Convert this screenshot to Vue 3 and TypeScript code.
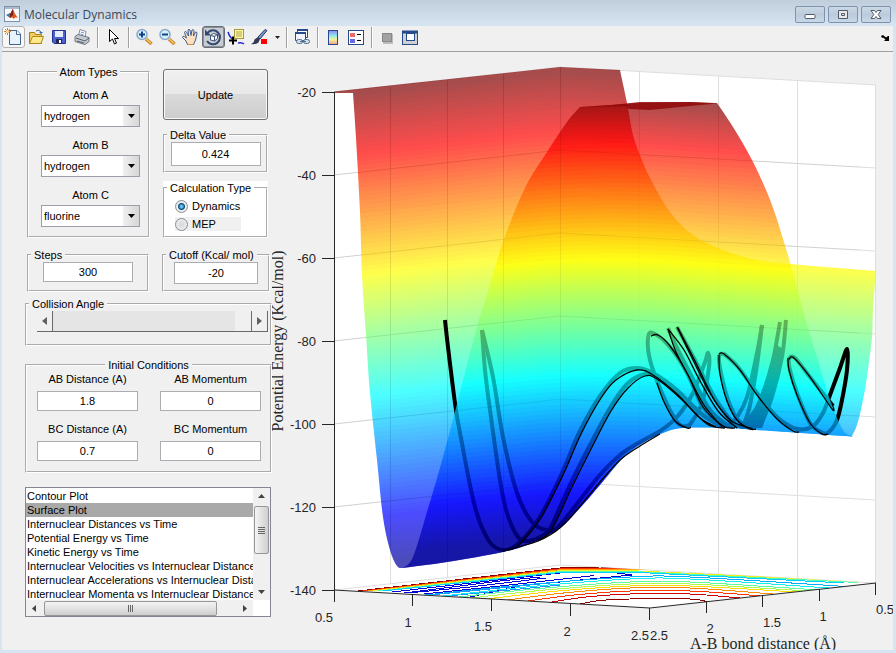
<script setup lang="ts">
import { ref } from 'vue'

type Point = [number, number]

const atoms = ref([
  { id: 'atom-a', label: 'Atom A', value: 'hydrogen' },
  { id: 'atom-b', label: 'Atom B', value: 'hydrogen' },
  { id: 'atom-c', label: 'Atom C', value: 'fluorine' },
])
const elements = ['hydrogen', 'fluorine', 'chlorine']

const delta = ref('0.424')
const calcType = ref('dynamics')
const steps = ref('300')
const cutoff = ref('-20')
const angle = ref(180)

const conditions = ref([
  { id: 'ab-dist', label: 'AB Distance (A)', value: '1.8' },
  { id: 'ab-mom', label: 'AB Momentum', value: '0' },
  { id: 'bc-dist', label: 'BC Distance (A)', value: '0.7' },
  { id: 'bc-mom', label: 'BC Momentum', value: '0' },
])

const plots = [
  'Contour Plot',
  'Surface Plot',
  'Internuclear Distances vs Time',
  'Potential Energy vs Time',
  'Kinetic Energy vs Time',
  'Internuclear Velocities vs Internuclear Distance',
  'Internuclear Accelerations vs Internuclear Distance',
  'Internuclear Momenta vs Internuclear Distance',
]
const plot = ref('Surface Plot')

/* Jet colour map, t from 0 (dark blue) to 1 (dark red). */
function jet(t: number): string {
  const c = (k: number) =>
    Math.round(255 * Math.max(0, Math.min(1, 1.5 - Math.abs(4 * t - k))))
  return `rgb(${c(3)},${c(2)},${c(1)})`
}

/* Each band starts at its own height and runs to the floor; later bands cover earlier ones. */
const bandTops = Array.from({ length: 120 }, (_, i) => 60 + i * 4.4)
const level = (y: number) => Math.min(1, Math.max(0.03, 1 - (y - 68) / 488))
const backBands = bandTops.map((y) => ({
  d: `M330 ${y + 25}L530 ${y + 3}Q560 ${y} 590 ${y + 2}L880 ${y + 18}V640H330Z`,
  fill: jet(level(y)),
}))
const frontBands = bandTops.map((y) => {
  const u = y < 144 ? 67 + ((y - 97) * 64) / 47 : 131 + ((y - 144) * 239) / 226
  return {
    d: `M330 ${y + 24}L540 ${y + 3}Q620 ${y - 4} 700 ${y + 4}L880 ${y + 16}V640H330Z`,
    fill: jet(level(u)),
  }
})

/* Catmull-Rom spline through the points, as a fragment that starts with the given command. */
function spline(p: Point[], start = 'M'): string {
  let d = `${start}${p[0][0]} ${p[0][1]}`
  for (let i = 0; i < p.length - 1; i++) {
    const a = p[Math.max(0, i - 1)]
    const b = p[i]
    const c = p[i + 1]
    const e = p[Math.min(p.length - 1, i + 2)]
    d += `C${b[0] + (c[0] - a[0]) / 6} ${b[1] + (c[1] - a[1]) / 6} ${c[0] - (e[0] - b[0]) / 6} ${c[1] - (e[1] - b[1]) / 6} ${c[0]} ${c[1]}`
  }
  return d
}

const valley: Point[] = [[852, 436], [843, 436], [757, 430], [723, 428], [683, 428], [663, 433], [643, 443], [623, 458], [600, 485], [580, 508], [560, 528], [532, 543], [503, 552], [447, 562], [403, 568]]
const leftEdge: Point[] = [[403, 568], [397, 566], [390, 550], [383, 517], [377, 460], [370, 393], [366, 335], [362, 275], [360, 212], [356, 138], [353, 93]]
const backRight: Point[] = [[620, 70], [627, 103], [633, 135], [640, 155], [650, 178], [670, 212], [693, 235], [723, 250], [757, 260], [790, 264], [876, 271]]
const rightEdge: Point[] = [[876, 271], [873, 310], [872, 337], [867, 377], [862, 405], [857, 425], [852, 436]]
const frontLeft: Point[] = [[403, 568], [413, 557], [427, 512], [443, 457], [458, 400], [477, 327], [487, 295], [503, 242], [525, 188], [547, 152], [567, 122], [580, 107]]
const frontRight: Point[] = [[717, 103], [733, 127], [753, 162], [772, 205], [790, 262], [798, 292], [810, 335], [817, 357], [830, 400], [843, 430], [852, 436]]

const backShape = `M334 91.5L560 67${spline(backRight, 'L')}${spline(rightEdge, 'L')}${spline(valley, 'L')}${spline(leftEdge, 'L')}L334 93Z`
const frontShape = `${spline(frontLeft)}L640 103L690 102${spline(frontRight, 'L')}${spline(valley, 'L')}Z`

const hidden: string[] = [
  [[445, 320], [448, 347], [455, 403], [460, 433], [475, 507], [489, 541], [503, 550], [518, 544], [540, 517], [562, 473], [579, 433], [600, 396], [620, 373], [637, 368], [653, 373], [677, 390], [700, 413], [722, 427]],
  [[482, 330], [485, 370], [490, 410], [500, 480], [507, 513], [518, 537], [528, 541], [542, 536], [551, 527], [569, 487], [590, 445], [610, 408], [627, 384], [645, 374], [657, 377], [678, 393], [707, 418], [725, 427]],
  [[482, 330], [493, 377], [503, 437], [517, 493], [532, 522], [547, 530], [560, 525], [598, 477], [620, 455], [640, 442], [660, 431], [677, 417], [693, 393], [705, 362], [708, 353], [709, 367], [702, 403], [693, 420], [687, 426], [677, 422], [662, 393], [650, 360], [648, 338], [653, 333], [670, 347], [687, 373], [703, 407], [723, 425], [733, 428]],
  [[668, 328], [677, 348], [692, 377], [710, 410], [730, 427]],
  [[677, 327], [695, 360], [715, 398], [735, 424], [753, 428]],
  [[762, 325], [757, 353], [747, 397], [737, 417], [727, 427]],
  [[762, 325], [757, 365], [750, 405], [743, 427]],
  [[780, 322], [773, 360], [763, 393], [750, 423]],
  [[786, 320], [782, 357], [772, 397], [760, 427]],
  [[723, 353], [719, 357], [721, 373], [728, 400], [738, 420], [750, 428]],
  [[723, 353], [738, 367], [757, 393], [777, 417], [797, 429], [813, 426], [823, 413], [830, 395], [840, 368], [847, 349], [847, 370], [842, 400], [837, 420], [830, 431], [823, 433], [810, 423], [797, 393], [790, 370], [789, 359], [795, 358], [810, 377], [833, 406]],
].map((p) => spline(p as Point[]))

const hiddenMass = 'M777 345L784 350L772 400L762 428H738L750 414L757 405L766 388Z'

const visible: string[] = [
  [[518, 546], [540, 519], [563, 475], [581, 434], [601, 398], [616, 380], [637, 370], [653, 375], [677, 394], [700, 418], [716, 427]],
  [[538, 541], [552, 529], [571, 489], [591, 449], [611, 411], [628, 388], [645, 376], [657, 379], [680, 398], [707, 424], [725, 428]],
  [[503, 551], [538, 541], [561, 527], [585, 500], [600, 482], [620, 460], [640, 446], [660, 434]],
  [[657, 383], [664, 402], [675, 421], [687, 428], [691, 427]],
  [[651, 336], [658, 335], [670, 346], [687, 373], [703, 407], [723, 426], [735, 428]],
  [[668, 329], [676, 352], [689, 377], [704, 405], [722, 427]],
  [[668, 329], [684, 350], [699, 379], [718, 411], [737, 428]],
  [[677, 327], [692, 358], [711, 395], [730, 420], [753, 429]],
  [[678, 328], [697, 365], [715, 401], [732, 422]],
  [[719, 355], [720, 374], [727, 401], [737, 420], [750, 429], [756, 429]],
  [[719, 354], [724, 354], [740, 370], [757, 395], [777, 419], [793, 431], [799, 432]],
  [[788, 358], [789, 370], [797, 395], [810, 423], [822, 434], [828, 434]],
  [[789, 359], [794, 358], [810, 377], [832, 409], [833, 406]],
].map((p) => spline(p as Point[]))

/* Heights of the seven energy ticks on the left edge, 83 apart. */
const ticks = [-20, -40, -60, -80, -100, -120, -140].map((v, i) => ({ v, y: 92 + i * 83 }))
const verticals = [
  [390, 86, 584], [447, 80, 578], [503, 74, 572], [560, 67, 565],
  [639, 72, 570], [718, 76, 574], [797, 81, 579], [875, 85, 583],
]
const floorTicks = [
  [334, 590], [412, 594], [491, 599], [570, 604], [649, 608],
  [706, 601], [762, 595], [819, 589], [875, 583],
]
const floorLabels = [
  [324, 622, '0.5'], [408, 627, '1'], [483, 631, '1.5'], [567, 636, '2'], [640, 640, '2.5'],
  [659, 640, '2.5'], [710, 633, '2'], [772, 627, '1.5'], [823, 621, '1'], [885, 614, '0.5'],
]

/* Contours on the floor: the steep ones follow the back edge, the rest arch towards the front. */
const backColours = ['#900000', '#ff3300', '#ffa000', '#f0f020', '#50ffb0', '#00d0ff']
const backContours = backColours.map((c, i) => ({
  c,
  d: `M${358 + i * 5} 591L560 ${568 + i * 0.9}L${600 + i * 8} ${567 + i * 1.1}L${i < 3 ? 640 + i * 25 : 872 - (i - 3) * 14} ${i < 3 ? 568 + i * 1.2 : 582 + (i - 3) * 0.5}`,
}))
const front: [string, number, number, number][] = [
  ['#900000', 580, 599, 707], ['#d00000', 550, 594, 740], ['#ff3800', 528, 591, 760],
  ['#ff8c00', 508, 588, 775], ['#ffe000', 488, 586, 795], ['#b0ff50', 472, 584, 805],
  ['#60ffa0', 458, 582, 815], ['#10f0f0', 442, 579, 830], ['#00b0ff', 424, 577, 845],
]
const frontY = (x: number) => (x < 650 ? 590 + ((x - 334) * 18) / 316 : 608 - ((x - 650) * 25) / 226)
const frontContours = front.map(([c, a, y, b]) => ({
  c,
  d: spline([[a, frontY(a)], [(a + 620) / 2, (frontY(a) + y) / 2 - 1], [630, y], [690, y], [b, frontY(b)]]),
}))
const blueContours = [
  'M392 592L480 582L560 573L610 572L632 575L590 579L520 586L470 597',
  'M404 593L500 581L540 577', 'M408 593L470 587L546 578', 'M424 594L500 586L590 576L594 575',
  'M430 595L510 587L550 583', 'M448 596L520 589L560 585', 'M380 591L470 580L560 572',
]
</script>

<template>
  <div class="window">
    <header class="titlebar">
      <svg class="logo" width="16" height="16" viewBox="0 0 16 16" aria-hidden="true">
        <rect x=".5" y=".5" width="15" height="15" fill="#f6f9fc" stroke="#8292a6" />
        <rect x="1" y="1" width="14" height="2" fill="#a9bbd0" />
        <path d="M2 9l4-2 3 2-3 3z" fill="#3c7bb0" />
        <path d="M6 8c1-1 2-4 3-5 1 2 2 6 5 9-2-1-3-1-4 1-1-1-2-2-4-1z" fill="#d9541e" />
        <path d="M6 8c1-1 2-4 3-5l0 6-3 3z" fill="#7c2414" />
      </svg>
      <h1>Molecular Dynamics</h1>
      <div class="winbtns">
        <button type="button" aria-label="Minimize">
          <svg width="12" height="12"><rect x="1" y="5.500" width="10" height="4" rx="1" fill="#fff" stroke="#4f5a6c" /></svg>
        </button>
        <button type="button" aria-label="Maximize">
          <svg width="12" height="12"><path d="M1.500 1.500h9v8h-9zM4.500 4.500h3v2h-3z" fill="#e8e8e8" stroke="#4f5a6c" /></svg>
        </button>
        <button type="button" aria-label="Close">
          <svg width="12" height="12"><path d="M1 1.500h3.500L6 3.500l1.500-2H11L8.200 5.500 11 9.500H7.500L6 7.500l-1.500 2H1l2.800-4z" fill="#fff" stroke="#4f5a6c" /></svg>
        </button>
      </div>
    </header>

    <nav class="toolbar" aria-label="Figure toolbar">
      <button type="button" class="tool hover" aria-label="New figure">
        <svg width="18" height="18" viewBox="0 0 18 18">
          <path d="M5.500 2.500h7.500l3.500 3.500v10.500h-11z" fill="#e6f2fc" stroke="#44628c" />
          <path d="M12.500 2.500V6.500h4" fill="#fff" stroke="#44628c" />
          <path d="M3.500 0v7M0 3.500h7M1 1l5 5M6 1L1 6" stroke="#e0762c" /><circle cx="3.500" cy="3.500" r="1.500" fill="#fbe3a0" />
        </svg>
      </button>
      <button type="button" class="tool" aria-label="Open file">
        <svg width="18" height="18" viewBox="0 0 18 18">
          <path d="M2.500 15.500v-11h5l1 2h6v9z" fill="#f1cf63" stroke="#a87e12" />
          <path d="M2.500 15.500l3-7h11l-2.500 7z" fill="#fde98c" stroke="#b08614" />
          <path d="M9 3q3-2 5 1" stroke="#3a67a8" fill="none" /><path d="M12 4h4l-2 2z" fill="#3a67a8" />
        </svg>
      </button>
      <button type="button" class="tool" aria-label="Save figure">
        <svg width="18" height="18" viewBox="0 0 18 18">
          <path d="M2.500 2.500h13v13H4l-1.500-1.500z" fill="#4a5fd2" stroke="#26328e" />
          <rect x="5" y="3" width="8" height="6" fill="#e4edfb" /><rect x="6" y="11" width="6" height="4.500" fill="#20284c" /><rect x="9" y="12" width="2" height="3" fill="#fff" />
        </svg>
      </button>
      <button type="button" class="tool" aria-label="Print figure">
        <svg width="18" height="18" viewBox="0 0 18 18">
          <path d="M5.500 8L7 1.500l6 2-1 6" fill="#fff" stroke="#7e8da3" />
          <path d="M2 8.500l3-2 11 3v4l-4 3-10-3z" fill="#c5cad2" stroke="#6d7583" />
          <path d="M3 10l9 3 4-3M4 13l7 2" stroke="#58606c" fill="none" /><path d="M8 4l3 1M7.500 6l3 1" stroke="#6a8cc0" />
        </svg>
      </button>
      <i class="sep" />
      <button type="button" class="tool" aria-label="Edit plot">
        <svg width="18" height="18" viewBox="0 0 18 18"><path d="M5.500 1.500v12l3-2.500 2 5 2-1-2-4.500h4z" fill="#fff" stroke="#000" /></svg>
      </button>
      <i class="sep" />
      <button type="button" class="tool" aria-label="Zoom in">
        <svg width="18" height="18" viewBox="0 0 18 18">
          <path d="M11 11l5.500 5" stroke="#c98322" stroke-width="3.500" /><path d="M11 10.500l5 5" stroke="#f6c469" stroke-width="1.500" />
          <circle cx="7" cy="6.500" r="5" fill="#d5f0fa" stroke="#86aacb" stroke-width="1.500" /><path d="M4 6.500h6M7 3.500v6" stroke="#15418a" stroke-width="2" />
        </svg>
      </button>
      <button type="button" class="tool" aria-label="Zoom out">
        <svg width="18" height="18" viewBox="0 0 18 18">
          <path d="M11 11l5.500 5" stroke="#c98322" stroke-width="3.500" /><path d="M11 10.500l5 5" stroke="#f6c469" stroke-width="1.500" />
          <circle cx="7" cy="6.500" r="5" fill="#d5f0fa" stroke="#86aacb" stroke-width="1.500" /><path d="M4 6.500h6" stroke="#15418a" stroke-width="2" />
        </svg>
      </button>
      <button type="button" class="tool" aria-label="Pan">
        <svg width="18" height="18" viewBox="0 0 18 18">
          <path d="M6.500 16.500L5 13 1.500 9.500q0-2 2-1L5.500 10 3.500 4.500q.5-2 2-.5L7.500 8 7 2q1-1.500 2 0l1 5.500L11 2q1.500-1 2 .5L12.500 8l2-4q1.500-.5 1.500 1.500L14.500 12l-2 4.500z" fill="#fde0bd" stroke="#3e5c94" stroke-linejoin="round" />
          <path d="M7 16.500h5" stroke="#d98d4a" />
        </svg>
      </button>
      <button type="button" class="tool pressed" aria-label="Rotate 3D">
        <svg width="18" height="18" viewBox="0 0 18 18">
          <path d="M3.500 5A7 7 0 1 1 3 13" fill="none" stroke="#33486f" stroke-width="2" /><path d="M1 1.500v6h6z" fill="#33486f" />
          <path d="M6.500 7.500l3-2 4 1v4l-3 2.500-4-1zM6.500 7.500l4 1 3-2M10.500 8.500V13" fill="#fff" stroke="#3d5377" />
        </svg>
      </button>
      <button type="button" class="tool" aria-label="Data cursor">
        <svg width="18" height="18" viewBox="0 0 18 18">
          <path d="M1 4q1 4 4 7M11 15q4-1 6 1" fill="none" stroke="#2727e0" stroke-width="1.500" />
          <rect x="7.500" y="1.500" width="9" height="9" fill="#fdf6a8" stroke="#a49a3a" /><path d="M9 4h6M9 6h6M9 8h6" stroke="#b3a54c" />
          <path d="M2 12.500h8M6 8.500v8" stroke="#000" stroke-width="2" />
        </svg>
      </button>
      <button type="button" class="tool" aria-label="Brush data">
        <svg width="18" height="18" viewBox="0 0 18 18">
          <path d="M8 9l7-7.500 2 1L10 11z" fill="#7e90bf" stroke="#2c3d72" />
          <path d="M1 16q3-1 3.500-4.500L8 9l2 2-1.500 3.500Q5 17 1 16z" fill="#333a52" /><rect x="11" y="11" width="6" height="5" fill="#f00" />
        </svg>
      </button>
      <button type="button" class="caret" aria-label="Brush options"><svg width="5" height="3"><path d="M0 0h5L2.500 3z" fill="#222" /></svg></button>
      <i class="sep" />
      <button type="button" class="tool" aria-label="Link plot">
        <svg width="18" height="18" viewBox="0 0 18 18">
          <path d="M4.500 1.500h10v8h-10z" fill="#fff" stroke="#264a8c" /><path d="M4 2h11" stroke="#264a8c" stroke-width="2" />
          <path d="M2.500 4.500h10v8h-10z" fill="#f2f2fc" stroke="#264a8c" /><path d="M2 5h11" stroke="#264a8c" stroke-width="2" />
          <rect x="3.500" y="11.500" width="6" height="4" rx="2" fill="#d5dfe9" stroke="#52708e" /><rect x="10.500" y="11.500" width="6" height="4" rx="2" fill="#d5dfe9" stroke="#52708e" /><path d="M7 13.500h6" stroke="#52708e" />
        </svg>
      </button>
      <i class="sep" />
      <button type="button" class="tool" aria-label="Insert colorbar">
        <svg width="18" height="18" viewBox="0 0 18 18">
          <defs><linearGradient id="cb" x2="0" y2="1"><stop offset="0" stop-color="#8d85f0" /><stop offset=".35" stop-color="#8fe4f0" /><stop offset=".65" stop-color="#f3f19b" /><stop offset="1" stop-color="#f19a8a" /></linearGradient></defs>
          <rect x="4.500" y="2.500" width="9" height="14" fill="url(#cb)" stroke="#264a8c" />
        </svg>
      </button>
      <button type="button" class="tool" aria-label="Insert legend">
        <svg width="18" height="18" viewBox="0 0 18 18">
          <rect x="1.500" y="2.500" width="15" height="14" fill="#fff" stroke="#264a8c" />
          <rect x="3" y="5" width="5" height="4" fill="#e96a6a" /><rect x="3" y="11" width="5" height="4" fill="#6a6ae9" /><path d="M10 6.500h4M10 12.500h4" stroke="#000" />
        </svg>
      </button>
      <i class="sep" />
      <button type="button" class="tool" aria-label="Hide plot tools">
        <svg width="18" height="18" viewBox="0 0 18 18"><rect x="5" y="6" width="10" height="10" fill="#bcbcbc" /><rect x="4.500" y="5.500" width="9" height="8" fill="#a2a2a2" stroke="#888" /></svg>
      </button>
      <button type="button" class="tool" aria-label="Show plot tools and dock figure">
        <svg width="18" height="18" viewBox="0 0 18 18">
          <rect x="1.500" y="3.500" width="15" height="13" fill="#cdd2d0" stroke="#264a8c" /><path d="M1 4h16" stroke="#264a8c" stroke-width="3" /><rect x="5.500" y="5.500" width="8" height="7" fill="#fff" stroke="#264a8c" />
        </svg>
      </button>
      <button type="button" class="dock" aria-label="Dock figure">
        <svg width="8" height="7"><path d="M0 2l2-1 3 2.500L7 2h1v5H3l1.500-1.500L2 3.500 1 4z" fill="#000" /></svg>
      </button>
    </nav>

    <main class="body">
      <form class="controls" @submit.prevent>
        <div class="pair">
          <fieldset class="atoms">
            <legend>Atom Types</legend>
            <div v-for="a in atoms" :key="a.id" class="atom">
              <label :for="a.id">{{ a.label }}</label>
              <span class="drop">
                <select :id="a.id" v-model="a.value">
                  <option v-for="e in elements" :key="e">{{ e }}</option>
                </select>
                <span class="arrow"><svg width="7" height="4"><path d="M0 0h7L3.500 4z" /></svg></span>
              </span>
            </div>
          </fieldset>
          <div class="stack">
            <button type="submit" class="update">Update</button>
            <fieldset class="start">
              <legend><label for="delta">Delta Value</label></legend>
              <input id="delta" v-model="delta" class="field tall" type="text">
            </fieldset>
            <div class="white">
              <fieldset class="start">
                <legend>Calculation Type</legend>
                <label class="radio"><input v-model="calcType" type="radio" name="calc" value="dynamics">Dynamics</label>
                <label class="radio grey"><input v-model="calcType" type="radio" name="calc" value="mep">MEP</label>
              </fieldset>
            </div>
          </div>
        </div>

        <div class="pair limits">
          <fieldset class="start">
            <legend><label for="steps">Steps</label></legend>
            <input id="steps" v-model="steps" class="field" type="text">
          </fieldset>
          <fieldset class="start">
            <legend><label for="cutoff">Cutoff (Kcal/ mol)</label></legend>
            <input id="cutoff" v-model="cutoff" class="field narrow" type="text">
          </fieldset>
        </div>

        <fieldset class="start angle">
          <legend><label for="angle">Collision Angle</label></legend>
          <div class="slider">
            <button type="button" aria-label="Decrease angle" @click="angle = Math.max(0, angle - 1)"><svg width="5" height="8"><path d="M5 0v8L0 4z" /></svg></button>
            <input id="angle" v-model.number="angle" type="range" min="0" max="180">
            <button type="button" aria-label="Increase angle" @click="angle = Math.min(180, angle + 1)"><svg width="5" height="8"><path d="M0 0v8l5-4z" /></svg></button>
          </div>
        </fieldset>

        <fieldset class="initial">
          <legend>Initial Conditions</legend>
          <div class="conditions">
            <div v-for="c in conditions" :key="c.id" class="condition">
              <label :for="c.id">{{ c.label }}</label>
              <input :id="c.id" v-model="c.value" class="field" type="text">
            </div>
          </div>
        </fieldset>

        <div class="listbox">
          <select v-model="plot" size="8" aria-label="Plot type">
            <option v-for="p in plots" :key="p">{{ p }}</option>
          </select>
          <div class="vbar" aria-hidden="true">
            <svg width="7" height="4"><path d="M0 4h7L3.500 0z" /></svg>
            <span class="vthumb"><i /><i /><i /><i /></span>
            <svg class="end" width="7" height="4"><path d="M0 0h7L3.500 4z" /></svg>
          </div>
          <div class="hbar" aria-hidden="true">
            <svg width="4" height="7"><path d="M4 0v7L0 3.500z" /></svg>
            <span class="hthumb"><i /><i /><i /></span>
            <svg class="end" width="4" height="7"><path d="M0 0v7l4-3.500z" /></svg>
          </div>
        </div>
      </form>

      <svg class="plot" viewBox="272 52 621 598" preserveAspectRatio="xMinYMin meet" role="img" aria-label="Potential energy surface">
        <defs>
          <clipPath id="back"><path :d="backShape" /></clipPath>
          <clipPath id="front"><path :d="frontShape" /></clipPath>
          <clipPath id="floor"><path d="M334 590.500L560 565L876 583L650 608.500Z" /></clipPath>
        </defs>

        <path d="M334 92L560 67L876 85V583L650 608L334 590Z" fill="#fff" />
        <g class="grid">
          <path v-for="t in ticks" :key="t.v" :d="`M334 ${t.y}L560 ${t.y - 25}L876 ${t.y - 7}`" />
          <path v-for="v in verticals" :key="v[0]" :d="`M${v[0]}.500 ${v[1]}V${v[2]}`" />
        </g>

        <g clip-path="url(#floor)">
          <g class="contours">
            <path v-for="(b, i) in blueContours" :key="'b' + i" :d="b" :stroke="i < 4 ? '#0000d8' : '#2090ff'" />
            <path v-for="f in frontContours" :key="f.c" :d="f.d" :stroke="f.c" />
            <path v-for="b in backContours" :key="b.c" :d="b.d" :stroke="b.c" />
          </g>
        </g>

        <g opacity=".7" clip-path="url(#back)">
          <path v-for="(b, i) in backBands" :key="i" :d="b.d" :fill="b.fill" />
        </g>
        <g class="hidden-run" clip-path="url(#back)">
          <path v-for="(h, i) in hidden" :key="i" :d="h" />
          <path :d="hiddenMass" class="mass" />
        </g>
        <g opacity=".7" clip-path="url(#front)">
          <path v-for="(b, i) in frontBands" :key="i" :d="b.d" :fill="b.fill" />
        </g>
        <path d="M580 107L612 105L640 102L690 102L717 103.500L690 106L650 110L629 109L626 106Z" fill="#900808" opacity=".85" />
        <path class="faint" d="M390.500 86V550M447.500 80V558M503.500 74V548M560.500 67V525M334 175L560 150L860 167M334 258L560 233L860 250M334 341L560 316L860 333M334 424L560 399L860 416M334 507L560 482" />
        <g class="run">
          <path v-for="(v, i) in visible" :key="i" :d="v" />
        </g>

        <g class="axes">
          <path d="M334.500 92V602M334 590L650 608L876 583" />
          <path v-for="t in ticks" :key="t.v" :d="`M322 ${t.y}.500H334`" />
          <path v-for="f in floorTicks" :key="f[0]" :d="`M${f[0]}.500 ${f[1]}v12`" />
        </g>
        <g class="nums">
          <text v-for="t in ticks" :key="t.v" x="316" :y="t.y + 5" text-anchor="end">{{ t.v }}</text>
          <text v-for="(l, i) in floorLabels" :key="i" :x="l[0]" :y="l[1]" text-anchor="middle">{{ l[2] }}</text>
        </g>
        <text class="name" x="763" y="649" text-anchor="middle">A-B bond distance (Å)</text>
        <text class="name" transform="translate(283 341) rotate(-90)" text-anchor="middle">Potential Energy (Kcal/mol)</text>
      </svg>
    </main>
  </div>
</template>

<style>
html,
body {
  margin: 0;
  height: 100%;
}
#app {
  height: 100%;
}
</style>

<style scoped>
* {
  box-sizing: border-box;
}
.window {
  min-height: 100%;
  display: flex;
  flex-direction: column;
  padding: 0 3px 3px 2px;
  background: #d7e4f2;
  color: #000;
  font: 11px/14px "Liberation Sans", Arial, sans-serif;
}
button,
input,
select {
  font: inherit;
  color: inherit;
  margin: 0;
}
.titlebar {
  height: 26px;
  margin: 0 -3px 0 -2px;
  padding: 0 5px 0 4px;
  display: flex;
  align-items: center;
  gap: 4px;
  background: linear-gradient(#c0cddb, #d7e4f2);
}
.logo {
  margin-top: 2px;
}
h1 {
  margin: 3px auto 0 0;
  font: 12px/18px "Open Sans", "Noto Sans", sans-serif;
  color: #3c4858;
}
.winbtns {
  display: flex;
  gap: 3px;
  padding-top: 3px;
}
.winbtns button {
  width: 30px;
  height: 17px;
  padding: 0;
  display: grid;
  place-items: center;
  border: 1px solid #7f92b0;
  border-radius: 2px;
  background: linear-gradient(#cbd8e5, #bccbdc 50%, #c9d8e7);
}
.toolbar {
  height: 26px;
  display: flex;
  align-items: center;
  padding-bottom: 3px;
  background: #f0f0f0;
  border-bottom: 1px solid #a0a0a0;
}
.tool {
  width: 23px;
  height: 22px;
  padding: 0 2px 0 0;
  display: grid;
  place-items: center;
  border: 1px solid transparent;
  border-radius: 3px;
  background: none;
}
.tool.hover {
  border-color: #b4b4b4;
  background: #f7f7f7;
}
.tool.pressed {
  border-color: #6a6e76;
  box-shadow: inset 0 0 0 1px #8a8e96;
  background: #c9ccd3;
}
.caret {
  width: 12px;
  height: 22px;
  padding: 0;
  border: 0;
  background: none;
  display: grid;
  place-items: center;
}
.sep {
  width: 8px;
  height: 21px;
  background: linear-gradient(90deg, transparent 3px, #a0a0a0 3px 4px, #fff 4px 5px, transparent 5px);
}
.dock {
  margin-left: auto;
  padding: 0 4px 0 0;
  border: 0;
  background: none;
  display: grid;
}
.body {
  flex: 1;
  display: flex;
  background: #f0f0f0;
}
.controls {
  flex: none;
  width: 270px;
  padding: 13px 0 0 23px;
}
.pair {
  display: grid;
  grid-template-columns: 123px 105px;
  gap: 13px;
  padding-left: 2px;
}
fieldset {
  margin: 0;
  padding: 0;
  min-width: 0;
  border: 2px groove #fff;
  text-align: center;
}
legend {
  margin: 0 auto;
  padding: 0 3px;
  line-height: 14px;
}
.start legend {
  margin-left: 2px;
}
.atoms {
  height: 173px;
}
.atom {
  display: grid;
  gap: 3px;
  margin: 9px 8px 11px 12px;
}
.atom + .atom {
  margin-top: 0;
}
.drop {
  display: grid;
}
.drop select,
.drop .arrow {
  grid-area: 1 / 1;
}
.drop select {
  appearance: none;
  width: 100%;
  height: 22px;
  padding: 0 18px 0 2px;
  border: 1px solid #9c9eaa;
  border-radius: 0;
  background: #fff;
}
.arrow {
  justify-self: end;
  width: 16px;
  margin: 1px;
  display: grid;
  place-items: center;
  pointer-events: none;
  background: linear-gradient(90deg, #f0f0f0, #d6d6d6);
}
.stack {
  display: flex;
  flex-direction: column;
  gap: 8px;
  padding-top: 4px;
}
.update {
  height: 51px;
  border: 1px solid #707070;
  border-radius: 3px;
  box-shadow: inset 0 0 0 1px #f8f8f8;
  background: linear-gradient(#f0f0f0, #e8e8e8 48%, #dadada 50%, #cdcdcd);
}
.stack > fieldset {
  height: 45px;
}
.white {
  background: #fff;
}
.white fieldset {
  height: 57px;
  text-align: left;
}
.field {
  display: block;
  width: 90px;
  height: 20px;
  margin: 0 auto;
  padding: 0;
  border: 1px solid #abadb3;
  border-radius: 0;
  background: #fff;
  text-align: center;
}
.field.tall {
  height: 24px;
}
.field.narrow {
  width: 84px;
  height: 22px;
}
.radio {
  display: flex;
  align-items: center;
  gap: 4px;
  width: 66px;
  height: 14px;
  margin: 4px 0 0 10px;
  white-space: nowrap;
}
.radio.grey {
  background: #f0f0f0;
}
.radio input {
  appearance: none;
  flex: none;
  width: 13px;
  height: 13px;
  border: 1px solid #8a8d92;
  border-radius: 50%;
  background: radial-gradient(#d4d8dc, #f4f4f4);
}
.radio input:checked {
  background: radial-gradient(circle, #6cc4ee 0 1px, #0f4c7c 3px, #e8eef2 4px);
}
.limits {
  grid-template-columns: 122px 108px;
  margin-top: 10px;
}
.limits fieldset {
  height: 44px;
}
.angle {
  height: 49px;
  margin-top: 5px;
}
.slider {
  display: flex;
  height: 21px;
  margin: 0 2px 0 10px;
  border-bottom: 1px solid #696969;
}
.slider button {
  width: 16px;
  padding: 0;
  display: grid;
  place-items: center;
  border: 0;
  border-right: 1px solid #696969;
  background: #f0f0f0;
  fill: #606060;
}
.slider input {
  appearance: none;
  flex: 1;
  min-width: 0;
  height: 20px;
  border-radius: 0;
  background: #e5e5e5;
}
.slider input::-webkit-slider-thumb {
  appearance: none;
  width: 17px;
  height: 20px;
  border: 0;
  border-right: 1px solid #696969;
  border-radius: 0;
  background: #f0f0f0;
}
.initial {
  height: 115px;
  margin-top: 12px;
}
.conditions {
  display: grid;
  grid-template-columns: 101px 101px;
  gap: 11px 22px;
  padding-left: 10px;
}
.condition {
  display: grid;
  gap: 5px;
}
.condition .field {
  width: 100%;
}
.listbox {
  display: grid;
  grid-template: 112px 16px / 1fr 17px;
  width: 246px;
  margin-top: 14px;
  border: 1px solid #828790;
  background: #fff;
}
.listbox select {
  width: 100%;
  min-width: 0;
  height: 112px;
  padding: 1px 0 0;
  border: 0;
  border-radius: 0;
  outline: 0;
  overflow: hidden;
  background: #fff;
}
.listbox option {
  height: 14px;
  min-height: 14px;
  padding: 1px 1px 0;
  line-height: 14px;
}
.listbox option:checked {
  color: #000;
  background: linear-gradient(#a9a9a9, #a9a9a9);
}
.vbar,
.hbar {
  display: flex;
  align-items: center;
  background: #f0f0f0;
  fill: #444;
}
.vbar {
  flex-direction: column;
  padding: 6px 0;
}
.hbar {
  padding: 0 6px;
}
.vthumb,
.hthumb {
  display: flex;
  align-items: center;
  justify-content: center;
  gap: 1px;
  border: 1px solid #979797;
  border-radius: 2px;
}
.vthumb {
  flex-direction: column;
  width: 15px;
  height: 48px;
  margin-top: 8px;
  background: linear-gradient(90deg, #f4f4f4, #e2e2e2 50%, #cecece);
}
.hthumb {
  width: 173px;
  height: 15px;
  margin-left: 8px;
  background: linear-gradient(#f4f4f4, #e2e2e2 50%, #cecece);
}
.vthumb i {
  width: 7px;
  height: 1px;
  background: #666;
}
.hthumb i {
  width: 1px;
  height: 7px;
  background: #666;
}
.vbar .end {
  margin-top: auto;
}
.hbar .end {
  margin-left: auto;
}
.plot {
  flex: 1;
  min-width: 0;
  display: block;
}
.grid path {
  fill: none;
  stroke: #dedede;
}
.faint {
  fill: none;
  stroke: #000;
  opacity: 0.06;
}
.contours path {
  fill: none;
  stroke-width: 1;
  shape-rendering: crispEdges;
}
.hidden-run path {
  fill: none;
  stroke: #000;
  stroke-width: 4;
  stroke-linejoin: round;
}
.hidden-run .mass {
  fill: #000;
  stroke: none;
}
.run path {
  fill: none;
  stroke: #000;
  stroke-width: 1.3;
}
.axes path {
  fill: none;
  stroke: #262626;
}
.nums text {
  font: 13px "Liberation Sans", Arial, sans-serif;
  fill: #262626;
}
.name {
  font: 16px "Liberation Serif", "Times New Roman", serif;
  fill: #262626;
}
</style>
